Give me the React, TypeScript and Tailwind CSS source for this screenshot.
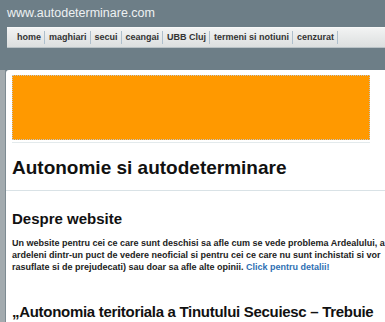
export default function App() {
  const nav = ["home", "maghiari", "secui", "ceangai", "UBB Cluj", "termeni si notiuni", "cenzurat"];

  return (
    <div className="h-[322px] w-[385px] overflow-hidden bg-[#6d7e87] font-['Liberation_Sans',Arial,sans-serif]">
      <div className="px-[7px] pt-[5px] h-[27px] text-[12.5px] leading-[16px] text-[#eef1f2]">www.autodeterminare.com</div>

      <div className="ml-[7px] h-[21px] flex items-center pl-[6px] bg-gradient-to-b from-[#f2f3f3] to-[#dcdfdf] border-t border-[#f7f8f8] border-b border-b-[#b9c2c6]">
        {nav.map((n) => (
          <span
            key={n}
            className="pl-[4px] pr-[3px] border-r border-[#aebfcc] text-[9px] leading-[13px] font-bold text-[#333] whitespace-nowrap"
          >
            {n}
          </span>
        ))}
      </div>

      <div className="h-[22px]" />

      <div className="flex">
        <div className="w-[6px] shrink-0 bg-[#a3abaf] border-r border-[#7e8b92] h-[260px]" />
        <div className="flex-1 bg-white rounded-tl-[3px] pt-[5px]">
          <div className="mx-[6px] w-[358px] h-[65px] bg-[#ff9900] border border-dotted border-[#bfc4c8]" />
          <div className="mx-[6px] w-[358px] h-px bg-[#e3eaec] mt-[2px]" />

          <h1 className="px-[6px] pt-[13px] pb-[10px] text-[19px] leading-[24px] font-bold text-[#111] whitespace-nowrap">
            Autonomie si autodeterminare
          </h1>
          <div className="h-px bg-[#d9e2e6]" />

          <h2 className="px-[6px] pt-[18px] text-[15px] leading-[20px] font-bold text-[#111] whitespace-nowrap">
            Despre website
          </h2>

          <p className="px-[6px] pt-[8px] text-[9px] leading-[12px] font-bold text-[#222] whitespace-nowrap">
            Un website pentru cei ce care sunt deschisi sa afle cum se vede problema Ardealului, a
            <br />
            ardeleni dintr-un puct de vedere neoficial si pentru cei ce care nu sunt inchistati si vor
            <br />
            rasuflate si de prejudecati) sau doar sa afle alte opinii.{" "}
            <a className="text-[#2f6fb3]">Click pentru detalii!</a>
          </p>

          <h2 className="px-[6px] pt-[29px] text-[15px] leading-[20px] tracking-[-0.3px] font-bold text-[#111] whitespace-nowrap">
            „Autonomia teritoriala a Tinutului Secuiesc – Trebuie
          </h2>
        </div>
      </div>
    </div>
  );
}
